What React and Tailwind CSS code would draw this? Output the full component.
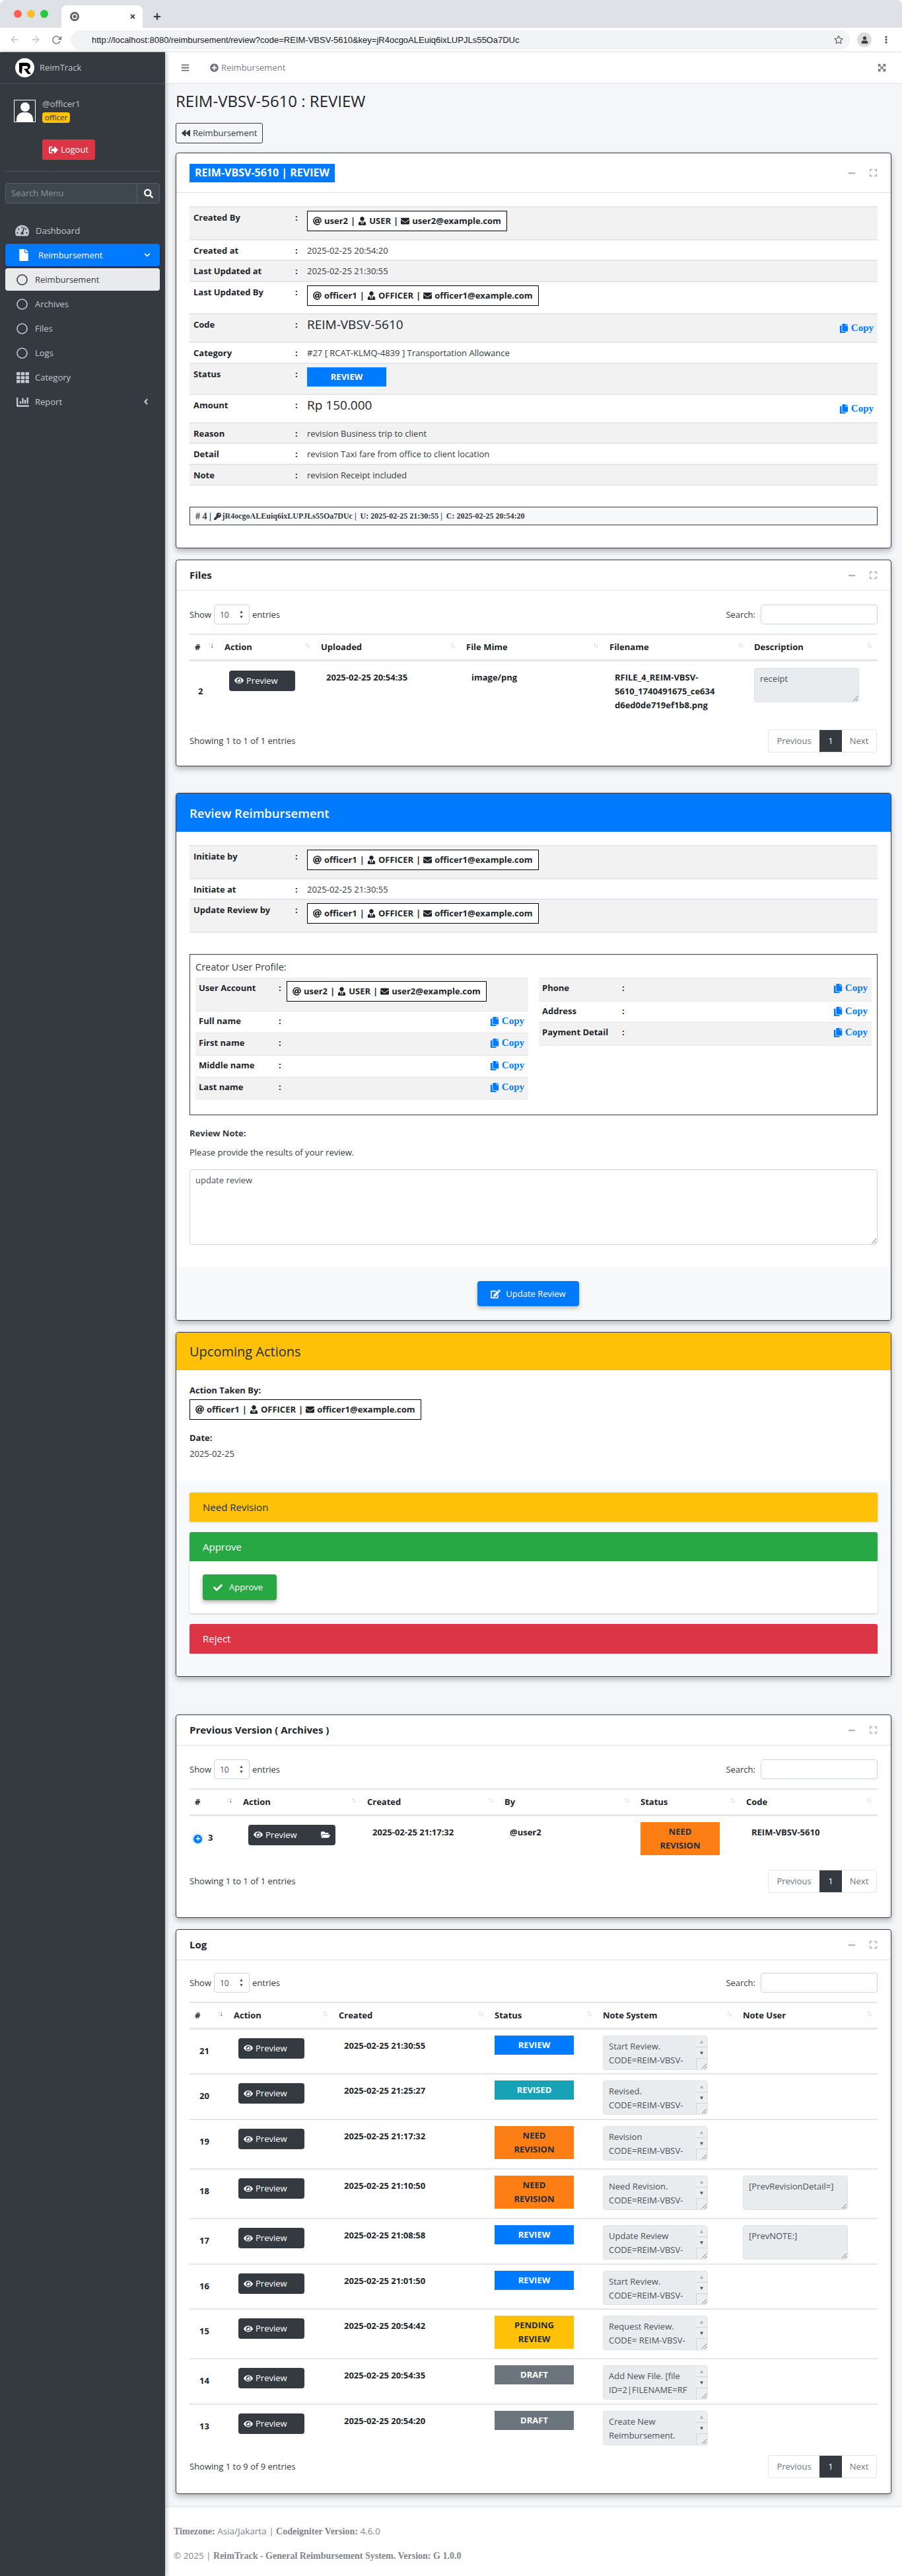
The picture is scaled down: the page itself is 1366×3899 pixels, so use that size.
import React from 'react';
import {
  FaTachometerAlt, FaFile, FaChevronDown, FaAngleLeft, FaBars, FaPlusCircle, FaExpandArrowsAlt, FaBackward,
  FaMinus, FaExpand, FaAt, FaUserTie, FaEnvelope, FaCopy, FaKey, FaEye, FaFolderOpen, FaEdit, FaCheck,
  FaSignOutAlt, FaTh, FaChartBar, FaSearch, FaRegCircle, FaUser, FaRegStar, FaEllipsisV, FaPlus, FaTimes,
} from 'react-icons/fa';
import { FiArrowLeft, FiArrowRight, FiRotateCw } from 'react-icons/fi';

function UserBox({ name, role, email, className = '' }) {
  return (
    <div className={`inline-flex items-center h-[31px] px-2 border border-black bg-white font-bold text-[#212529] whitespace-nowrap ${className}`}>
      <FaAt className="mr-1 text-[13px]" /> {name} <span className="mx-1">|</span>
      <FaUserTie className="mr-1 text-[13px]" /> {role} <span className="mx-1">|</span>
      <FaEnvelope className="mr-1 text-[13px]" /> {email}
    </div>
  );
}

function CopyBtn() {
  return (
    <span className="flex items-center gap-1 font-['Liberation_Serif',serif] font-bold text-[15px] text-[#007bff] whitespace-nowrap">
      <FaCopy className="text-[14px]" /> Copy
    </span>
  );
}

function InfoRow({ label, h, odd, children, copy }) {
  return (
    <div className={`flex border-t-2 border-[#e4e6e9] pt-[5px] ${h} ${odd ? 'bg-[#f2f2f2]' : 'bg-white'}`}>
      <div className="w-[160px] pl-[6px] font-bold text-[#212529] shrink-0">{label}</div>
      <div className="w-[18px] font-bold shrink-0 text-[#212529]">:</div>
      <div className="flex-1 text-[#343a40]">{children}</div>
      {copy && <div className="pr-[6px] self-center -mt-[5px]"><CopyBtn /></div>}
    </div>
  );
}

function ProfileRow({ label, h, odd, children, copy = true }) {
  return (
    <div className={`flex items-start border-t border-[#e4e6e9] pt-[4px] pl-[5px] pr-[6px] ${h} ${odd ? 'bg-[#f2f2f2]' : 'bg-white'}`}>
      <div className="w-[121px] font-bold text-[#212529] shrink-0">{label}</div>
      <div className="w-[12px] shrink-0 font-bold">:</div>
      <div className="flex-1">{children}</div>
      {copy && <CopyBtn />}
    </div>
  );
}

function CardTools() {
  return (
    <div className="flex items-center gap-[20px] text-[#adb5bd]">
      <FaMinus className="text-[12px]" />
      <FaExpand className="text-[13px]" />
    </div>
  );
}

function Card({ title, className = '', children }) {
  return (
    <section className={`bg-white border border-[#343a40] rounded-[4px] shadow-[0_4px_8px_rgba(0,0,0,0.28)] ${className}`}>
      <div className="flex items-center justify-between h-[46px] px-5 border-b border-[#dfe2e5]">
        <h3 className="font-bold text-[#212529] text-[15px]">{title}</h3>
        <CardTools />
      </div>
      {children}
    </section>
  );
}

function TableTools() {
  return (
    <div className="flex items-center justify-between h-[30px]">
      <div className="flex items-center text-[#343a40]">
        Show
        <span className="flex items-center justify-between w-[54px] h-[30px] mx-1 px-2 border border-[#ced4da] rounded-[4px] text-[12px] text-[#495057]">
          10
          <span className="flex flex-col text-[7px] leading-[8px]"><span>▲</span><span>▼</span></span>
        </span>
        entries
      </div>
      <div className="flex items-center text-[#343a40]">
        Search:
        <span className="block w-[177px] h-[30px] ml-2 border border-[#ced4da] rounded-[4px] bg-white"></span>
      </div>
    </div>
  );
}

function Pager({ text }) {
  return (
    <div className="flex items-center justify-between">
      <span className="text-[#343a40]">{text}</span>
      <div className="flex h-[35px] mr-px border border-[#e4e6e9] rounded-[4px] text-[#6c757d]">
        <span className="flex items-center justify-center w-[77px]">Previous</span>
        <span className="flex items-center justify-center w-[34px] bg-[#343a40] text-white">1</span>
        <span className="flex items-center justify-center w-[52px]">Next</span>
      </div>
    </div>
  );
}

function SortIcon({ active }) {
  return (
    <span className="text-[11px] font-normal tracking-[-2px] pr-[2px] leading-none mb-2 shrink-0">
      <span className="text-[#c4c8cc]">↑</span>
      <span className={active ? 'text-[#343a40]' : 'text-[#c4c8cc]'}>↓</span>
    </span>
  );
}

function TableHead({ cols }) {
  return (
    <thead>
      <tr className="border-t-2 border-b-[3px] border-t-[#e4e6e9] border-b-[#e4e6e9] h-[39px]">
        {cols.map((c, i) => (
          <th key={c} className="px-2 font-bold text-left text-[#212529]">
            <div className="flex items-center justify-between">
              {c}
              <SortIcon active={i === 0} />
            </div>
          </th>
        ))}
      </tr>
    </thead>
  );
}

function PreviewBtn({ folder, className = 'w-[100px]' }) {
  return (
    <span className={`inline-flex items-center justify-between h-[31px] px-2 bg-[#343a40] text-white rounded-[4px] ${className}`}>
      <span className="flex items-center gap-1"><FaEye className="text-[14px]" /> Preview</span>
      {folder && <FaFolderOpen className="text-[14px]" />}
    </span>
  );
}

function StatusBadge({ color, children, className = '' }) {
  return (
    <div className={`w-[120px] px-4 py-[4px] font-bold text-center leading-[21px] ${color} ${className}`}>{children}</div>
  );
}

const blue = 'bg-[#007bff] text-white';
const teal = 'bg-[#17a2b8] text-white';
const orange = 'bg-[#fd7e14] text-[#1f2d3d]';
const yellow = 'bg-[#ffc107] text-[#1f2d3d]';
const grey = 'bg-[#6c757d] text-white';

const logs = [
  { id: 21, at: '2025-02-25 21:30:55', status: 'REVIEW', color: blue, sys: 'Start Review.\nCODE=REIM-VBSV-5610', h: 'h-[69px]' },
  { id: 20, at: '2025-02-25 21:25:27', status: 'REVISED', color: teal, sys: 'Revised.\nCODE=REIM-VBSV-5610', h: 'h-[69px]' },
  { id: 19, at: '2025-02-25 21:17:32', status: 'NEED REVISION', color: orange, sys: 'Revision\nCODE=REIM-VBSV-5610', h: 'h-[75px]' },
  { id: 18, at: '2025-02-25 21:10:50', status: 'NEED REVISION', color: orange, sys: 'Need Revision.\nCODE=REIM-VBSV-5610', user: '[PrevRevisionDetail=]', h: 'h-[75px]' },
  { id: 17, at: '2025-02-25 21:08:58', status: 'REVIEW', color: blue, sys: 'Update Review\nCODE=REIM-VBSV-5610', user: '[PrevNOTE:]', h: 'h-[69px]' },
  { id: 16, at: '2025-02-25 21:01:50', status: 'REVIEW', color: blue, sys: 'Start Review.\nCODE=REIM-VBSV-5610', h: 'h-[68px]' },
  { id: 15, at: '2025-02-25 20:54:42', status: 'PENDING REVIEW', color: yellow, sys: 'Request Review.\nCODE= REIM-VBSV-5610', h: 'h-[75px]' },
  { id: 14, at: '2025-02-25 20:54:35', status: 'DRAFT', color: grey, sys: 'Add New File. [file\nID=2|FILENAME=RF', h: 'h-[69px]' },
  { id: 13, at: '2025-02-25 20:54:20', status: 'DRAFT', color: grey, sys: 'Create New\nReimbursement.', h: 'h-[69px]' },
];

function Grip() {
  return (
    <svg width="9" height="9" viewBox="0 0 9 9" className="absolute right-[1px] bottom-[1px]">
      <path d="M1 8L8 1M5 8L8 5" stroke="#6c757d" strokeWidth="1" fill="none" />
    </svg>
  );
}

function NoteBox({ value, scroll, h = 'h-[52px]' }) {
  return (
    <div className={`relative w-[159px] ${h}`}>
      <textarea
        readOnly
        value={value}
        className={`block w-full h-full py-[5px] pl-2 bg-[#e9ecef] border border-[#dfe2e5] rounded-[4px] text-[#495057] leading-[21px] overflow-hidden resize-none ${scroll ? 'pr-[22px]' : 'pr-2'}`}
      />
      {scroll && (
        <div className="absolute top-[1px] right-[1px] bottom-[1px] w-[17px] flex flex-col items-center bg-[#eceef0]">
          <span className="h-[17px] w-full border-b border-[#ced4da] text-center text-[8px] leading-[16px] text-[#a9adb1]">▲</span>
          <span className="h-[16px] text-[8px] leading-[16px] text-[#495057]">▼</span>
          <span className="flex-1 w-full border-t border-l border-[#ced4da]"></span>
        </div>
      )}
      <Grip />
    </div>
  );
}

function Sidebar() {
  const sub = ['Archives', 'Files', 'Logs'];
  return (
    <aside className="w-[250px] shrink-0 bg-[#343a40] text-[#c2c7d0] shadow-[2px_0_6px_rgba(0,0,0,0.25)] z-10">
      <div className="flex items-center h-[48px] pl-[23px] border-b border-[#4b545c]">
        <svg width="29" height="29" viewBox="0 0 29 29" className="shrink-0">
          <circle cx="14.5" cy="14.5" r="14.5" fill="#fff" />
          <path d="M6 7h11c4 0 6 2.500 6 5.500 0 2.500-1.500 4.500-4 5l5 6.500h-5l-6-8h4c1.300 0 2-.8 2-1.800S18.300 12 17 12h-6l-1 12-4-3z" fill="#000" />
        </svg>
        <span className="ml-2 text-[13px]">ReimTrack</span>
      </div>
      <div className="flex pl-[21px] pt-[24px] h-[132px] items-start">
        <div className="relative w-[33px] h-[34px] border border-white bg-[#343a40] overflow-hidden shrink-0">
          <span className="absolute left-[9px] top-[3px] w-[14px] h-[14px] rounded-full bg-white"></span>
          <span className="absolute left-[3px] top-[18px] w-[25px] h-[20px] rounded-t-[10px] bg-white"></span>
        </div>
        <div className="ml-[10px] -mt-[4px]">
          <div className="h-[20px]">@officer1</div>
          <span className="inline-block h-[16px] px-1 leading-[15px] rounded-[4px] bg-[#ffc107] text-[#1f2d3d] text-[11.500px]">officer</span>
          <div className="flex items-center justify-center gap-1 w-[80px] h-[31px] mt-[23px] rounded-[3px] bg-[#dc3545] text-white">
            <FaSignOutAlt className="text-[14px]" /> Logout
          </div>
        </div>
      </div>
      <div className="mx-2 border-t border-[#4f5962]"></div>
      <div className="flex h-[31px] mx-2 mt-[17px] border border-[#56606a] rounded-[4px] bg-[#3f474e]">
        <span className="flex-1 pl-2 leading-[29px] text-[#8d949b]">Search Menu</span>
        <span className="flex items-center justify-center w-[34px] border-l border-[#56606a] text-white"><FaSearch className="text-[14px]" /></span>
      </div>
      <nav className="mx-2 mt-[24px]">
        <div className="flex items-center h-[34px] mb-[3px] pl-[16px]">
          <FaTachometerAlt className="w-[21px] text-[20px] -ml-[1px] mr-[10px]" /> Dashboard
        </div>
        <div className="flex items-center h-[34px] mb-[3px] pl-[19px] pr-[14px] rounded-[4px] bg-[#007bff] text-white shadow-[0_1px_3px_rgba(0,0,0,0.3)]">
          <FaFile className="text-[18px] mr-[13px]" /> <span className="flex-1">Reimbursement</span> <FaChevronDown className="text-[10px]" />
        </div>
        <div className="flex items-center h-[34px] mb-[3px] pl-[17px] rounded-[4px] bg-[#e9eaeb] text-[#343a40]">
          <FaRegCircle className="text-[17px] mr-[11px]" /> Reimbursement
        </div>
        {sub.map((s) => (
          <div key={s} className="flex items-center h-[34px] mb-[3px] pl-[17px]">
            <FaRegCircle className="text-[17px] mr-[11px]" /> {s}
          </div>
        ))}
        <div className="flex items-center h-[34px] mb-[3px] pl-[17px]">
          <FaTh className="text-[19px] mr-[9px]" /> Category
        </div>
        <div className="flex items-center h-[34px] pl-[17px] pr-[14px]">
          <FaChartBar className="text-[19px] mr-[9px]" /> <span className="flex-1">Report</span> <FaAngleLeft className="text-[14px]" />
        </div>
      </nav>
    </aside>
  );
}

function BrowserBar() {
  return (
    <header className="shrink-0 rounded-t-[8px] overflow-hidden">
      <div className="relative flex items-end h-[42px] pl-[93px] bg-[#dee1e6]">
        <div className="absolute left-[21px] top-[15px] flex gap-[8px]">
          <span className="w-[12px] h-[12px] rounded-full bg-[#ff5f57]"></span>
          <span className="w-[12px] h-[12px] rounded-full bg-[#febc2e]"></span>
          <span className="w-[12px] h-[12px] rounded-full bg-[#28c840]"></span>
        </div>
        <div className="flex items-center justify-between w-[123px] h-[34px] pl-3 pr-[10px] bg-white rounded-t-[8px]">
          <svg width="16" height="16" viewBox="0 0 16 16">
            <circle cx="8" cy="8" r="7" fill="#5f6368" />
            <circle cx="8" cy="8" r="4" fill="#fff" />
            <circle cx="8" cy="8" r="2.500" fill="#5f6368" />
          </svg>
          <FaTimes className="text-[10px] text-[#3c4043]" />
        </div>
        <FaPlus className="ml-[16px] mb-[11px] text-[12px] text-[#3c4043]" />
      </div>
      <div className="flex items-center h-[37px] bg-white border-b border-[#dadce0]">
        <FiArrowLeft className="ml-[14px] text-[16px] text-[#bdc1c6]" />
        <FiArrowRight className="ml-[16px] text-[16px] text-[#bdc1c6]" />
        <FiRotateCw className="ml-[16px] text-[15px] text-[#5f6368]" />
        <div className="flex items-center flex-1 h-[29px] ml-[14px] pl-[32px] pr-[10px] rounded-full bg-[#f1f3f4] font-['Liberation_Sans',sans-serif] text-[13px] text-[#202124]">
          <span className="flex-1">http://localhost:8080/reimbursement/review?code=REIM-VBSV-5610&amp;key=jR4ocgoALEuiq6ixLUPJLs55Oa7DUc</span>
          <FaRegStar className="text-[14px] text-[#5f6368]" />
        </div>
        <span className="flex items-center justify-center w-[22px] h-[22px] ml-[11px] rounded-full bg-[#dadce0] text-[#3c4043]"><FaUser className="text-[11px]" /></span>
        <FaEllipsisV className="ml-[16px] mr-[18px] text-[12px] text-[#5f6368]" />
      </div>
    </header>
  );
}

export default function App() {
  return (
    <div className="flex flex-col w-full min-h-screen bg-white font-['Open_Sans',sans-serif] text-[13px] leading-[21px] text-[#212529]">
      <BrowserBar />
      <div className="flex flex-1">
        <Sidebar />
        <main className="flex-1 min-w-0 flex flex-col bg-[#f4f6f9]">
          <div className="flex items-center h-[48px] shrink-0 bg-white border-b border-[#dee2e6] text-[#7f8387]">
            <FaBars className="ml-[24px] text-[13px] text-[#6f7479]" />
            <FaPlusCircle className="ml-[31px] text-[13px] text-[#6f7479]" />
            <span className="ml-1 flex-1">Reimbursement</span>
            <FaExpandArrowsAlt className="mr-[24px] text-[13px] text-[#6f7479]" />
          </div>

          <div className="px-4">
            <h1 className="mt-[8px] h-[36px] leading-[36px] text-[24px] font-medium text-[#212529]">REIM-VBSV-5610 : REVIEW</h1>
            <div className="inline-flex items-center gap-1 h-[31px] mt-[15px] px-2 border border-[#343a40] rounded-[3px] text-[#343a40]">
              <FaBackward className="text-[13px]" /> Reimbursement
            </div>

            {/* detail card */}
            <section className="mt-[14px] h-[599px] bg-white border border-[#343a40] rounded-[4px] shadow-[0_4px_8px_rgba(0,0,0,0.28)]">
              <div className="flex items-center justify-between h-[60px] pl-5 pr-[20px] border-b border-[#dfe2e5]">
                <span className="flex items-center h-[28px] px-2 bg-[#007bff] text-white font-bold text-[16px]">REIM-VBSV-5610 | REVIEW</span>
                <CardTools />
              </div>
              <div className="px-5 pt-[20px]">
                <InfoRow label="Created By" h="h-[50px]" odd><UserBox name="user2" role="USER" email="user2@example.com" /></InfoRow>
                <InfoRow label="Created at" h="h-[31px]">2025-02-25 20:54:20</InfoRow>
                <InfoRow label="Last Updated at" h="h-[32px]" odd>2025-02-25 21:30:55</InfoRow>
                <InfoRow label="Last Updated By" h="h-[49px]"><UserBox name="officer1" role="OFFICER" email="officer1@example.com" /></InfoRow>
                <InfoRow label="Code" h="h-[43px]" odd copy><span className="text-[19px] font-medium text-[#212529]">REIM-VBSV-5610</span></InfoRow>
                <InfoRow label="Category" h="h-[32px]">#27 [ RCAT-KLMQ-4839 ] Transportation Allowance</InfoRow>
                <InfoRow label="Status" h="h-[47px]" odd><StatusBadge color={blue} className="h-[29px]">REVIEW</StatusBadge></InfoRow>
                <InfoRow label="Amount" h="h-[43px]" copy><span className="text-[19px] font-medium text-[#212529]">Rp 150.000</span></InfoRow>
                <InfoRow label="Reason" h="h-[31px]" odd>revision Business trip to client</InfoRow>
                <InfoRow label="Detail" h="h-[32px]">revision Taxi fare from office to client location</InfoRow>
                <div className="border-b-2 border-[#e4e6e9]">
                  <InfoRow label="Note" h="h-[31px]" odd>revision Receipt included</InfoRow>
                </div>
                <div className="flex items-center h-[28px] mt-[32px] px-2 border border-[#343a40] bg-[#f8f9fa] font-['Liberation_Serif',serif] font-bold text-[12px] text-[#343a40]">
                  <span className="text-[14px]"># 4 |&nbsp;</span><FaKey className="text-[11px] mr-[2px]" /> jR4ocgoALEuiq6ixLUPJLs55Oa7DUc&nbsp;|&nbsp; U: 2025-02-25 21:30:55&nbsp;|&nbsp; C: 2025-02-25 20:54:20
                </div>
              </div>
            </section>

            <Card title="Files" className="mt-[17px] h-[313px]">
              <div className="px-5 pt-[21px]">
                <TableTools />
                <table className="w-full mt-[14px] table-fixed border-collapse">
                  <colgroup>
                    <col className="w-[45px]" /><col className="w-[146px]" /><col className="w-[220px]" /><col className="w-[217px]" /><col className="w-[219px]" /><col />
                  </colgroup>
                  <TableHead cols={['#', 'Action', 'Uploaded', 'File Mime', 'Filename', 'Description']} />
                  <tbody>
                    <tr className="h-[92px] align-top">
                      <td className="pl-[13px] pt-[35px] font-bold">2</td>
                      <td className="pl-[15px] pt-[14px]"><PreviewBtn /></td>
                      <td className="pl-[16px] pt-[14px] font-bold">2025-02-25 20:54:35</td>
                      <td className="pl-[16px] pt-[14px] font-bold">image/png</td>
                      <td className="pl-[16px] pt-[14px] font-bold whitespace-nowrap">
                        RFILE_4_REIM-VBSV-<br />5610_1740491675_ce634<br />d6ed0de719ef1b8.png
                      </td>
                      <td className="pl-2 pt-[10px]"><NoteBox value="receipt" /></td>
                    </tr>
                  </tbody>
                </table>
                <div className="mt-[13px]"><Pager text="Showing 1 to 1 of 1 entries" /></div>
              </div>
            </Card>

            {/* review form */}
            <section className="mt-[40px] h-[799px] flex flex-col bg-white border border-[#343a40] rounded-[4px] overflow-hidden shadow-[0_4px_8px_rgba(0,0,0,0.28)]">
              <div className="flex items-center h-[58px] px-5 bg-[#007bff] text-white font-semibold text-[18.500px] shrink-0">Review Reimbursement</div>
              <div className="flex-1 px-5 pt-[20px]">
                <InfoRow label="Initiate by" h="h-[50px]" odd><UserBox name="officer1" role="OFFICER" email="officer1@example.com" /></InfoRow>
                <InfoRow label="Initiate at" h="h-[31px]">2025-02-25 21:30:55</InfoRow>
                <div className="border-b-2 border-[#e4e6e9]">
                  <InfoRow label="Update Review by" h="h-[50px]" odd><UserBox name="officer1" role="OFFICER" email="officer1@example.com" /></InfoRow>
                </div>
                <div className="h-[244px] mt-[32px] px-2 pt-2 border border-[#343a40]">
                  <div className="text-[14.500px] h-[27px] text-[#343a40]">Creator User Profile:</div>
                  <div className="grid grid-cols-2 gap-[16px]">
                    <div className="border-b border-[#e4e6e9]">
                      <ProfileRow label="User Account" h="h-[50px]" odd copy={false}><UserBox name="user2" role="USER" email="user2@example.com" /></ProfileRow>
                      <ProfileRow label="Full name" h="h-[33px]" />
                      <ProfileRow label="First name" h="h-[34px]" odd />
                      <ProfileRow label="Middle name" h="h-[33px]" />
                      <ProfileRow label="Last name" h="h-[33px]" odd />
                    </div>
                    <div className="self-start border-b border-[#e4e6e9]">
                      <ProfileRow label="Phone" h="h-[35px]" odd />
                      <ProfileRow label="Address" h="h-[32px]" />
                      <ProfileRow label="Payment Detail" h="h-[35px]" odd />
                    </div>
                  </div>
                </div>
                <div className="mt-[17px] font-bold text-[#343a40]">Review Note:</div>
                <p className="mt-[8px] text-[#343a40]">Please provide the results of your review.</p>
                <div className="relative h-[114px] mt-[15px]">
                  <textarea readOnly value="update review" className="block w-full h-full px-2 py-[5px] border border-[#ced4da] rounded-[4px] text-[#495057] resize-none" />
                  <Grip />
                </div>
              </div>
              <div className="flex justify-center items-start h-[80px] pt-[21px] pr-[16px] bg-[#f8f9fa] shrink-0">
                <span className="flex items-center justify-center gap-2 w-[154px] h-[38px] rounded-[4px] bg-[#007bff] text-white shadow-[0_3px_6px_rgba(0,0,0,0.25)]">
                  <FaEdit className="text-[15px]" /> Update Review
                </span>
              </div>
            </section>

            {/* next actions */}
            <section className="mt-[17px] h-[522px] flex flex-col bg-white border border-[#343a40] rounded-[4px] overflow-hidden shadow-[0_4px_8px_rgba(0,0,0,0.28)]">
              <div className="flex items-center h-[57px] px-5 bg-[#ffc107] text-[#1f2d3d] font-medium text-[20px] shrink-0">Upcoming Actions</div>
              <div className="h-[168px] px-5 pt-[20px] shrink-0">
                <div className="font-bold text-[#212529]">Action Taken By:</div>
                <UserBox name="officer1" role="OFFICER" email="officer1@example.com" className="mt-[3px]" />
                <div className="mt-[17px] font-bold text-[#212529]">Date:</div>
                <div className="mt-[3px] text-[#343a40]">2025-02-25</div>
              </div>
              <div className="flex-1 px-5 pt-[17px] bg-[#f8f9fa]">
                <div className="flex items-center h-[44px] px-5 rounded-t-[3px] bg-[#ffc107] text-[#1f2d3d] text-[15px] shadow-[0_1px_3px_rgba(0,0,0,0.2)]">Need Revision</div>
                <div className="mt-[16px] bg-white rounded-[3px] shadow-[0_1px_3px_rgba(0,0,0,0.2)]">
                  <div className="flex items-center h-[44px] px-5 rounded-t-[3px] bg-[#28a745] text-white text-[15px]">Approve</div>
                  <div className="h-[79px] pl-5 pt-[20px]">
                    <span className="inline-flex items-center gap-[10px] w-[112px] h-[39px] pl-4 rounded-[4px] bg-[#28a745] text-white shadow-[0_3px_6px_rgba(0,0,0,0.3)]">
                      <FaCheck className="text-[14px]" /> Approve
                    </span>
                  </div>
                </div>
                <div className="flex items-center h-[45px] mt-[16px] px-5 rounded-t-[3px] bg-[#dc3545] text-white text-[15px]">Reject</div>
              </div>
            </section>

            <Card title="Previous Version ( Archives )" className="mt-[57px] h-[308px]">
              <div className="px-5 pt-[21px]">
                <TableTools />
                <table className="w-full mt-[14px] table-fixed border-collapse">
                  <colgroup>
                    <col className="w-[73px]" /><col className="w-[188px]" /><col className="w-[208px]" /><col className="w-[206px]" /><col className="w-[160px]" /><col />
                  </colgroup>
                  <TableHead cols={['#', 'Action', 'Created', 'By', 'Status', 'Code']} />
                  <tbody>
                    <tr className="h-[68px] align-top">
                      <td className="pt-[22px] pl-[4px]">
                        <div className="flex items-center gap-[7px]">
                          <span className="flex items-center justify-center w-[17px] h-[17px] mt-1 rounded-full bg-[#007bff] border-2 border-[#d6e6f8] text-white text-[8px]"><FaPlus /></span>
                          <b>3</b>
                        </div>
                      </td>
                      <td className="pl-[16px] pt-[13px]"><PreviewBtn folder className="w-[132px]" /></td>
                      <td className="pl-[16px] pt-[14px] font-bold">2025-02-25 21:17:32</td>
                      <td className="pl-[16px] pt-[14px] font-bold">@user2</td>
                      <td className="pl-2 pt-[9px]"><StatusBadge color={orange}>NEED REVISION</StatusBadge></td>
                      <td className="pl-[16px] pt-[14px] font-bold">REIM-VBSV-5610</td>
                    </tr>
                  </tbody>
                </table>
                <div className="mt-[15px]"><Pager text="Showing 1 to 1 of 1 entries" /></div>
              </div>
            </Card>

            <Card title="Log" className="mt-[17px] h-[855px]">
              <div className="px-5 pt-[19px]">
                <TableTools />
                <table className="w-full mt-[14px] table-fixed border-collapse">
                  <colgroup>
                    <col className="w-[59px]" /><col className="w-[159px]" /><col className="w-[236px]" /><col className="w-[164px]" /><col className="w-[212px]" /><col />
                  </colgroup>
                  <TableHead cols={['#', 'Action', 'Created', 'Status', 'Note System', 'Note User']} />
                  <tbody>
                    {logs.map((l, i) => (
                      <tr key={l.id} className={`align-top ${l.h} ${i < logs.length - 1 ? 'border-b-2 border-[#e4e6e9]' : ''}`}>
                        <td className="pl-[15px] pt-[22px] font-bold">{l.id}</td>
                        <td className="pl-[15px] pt-[13px]"><PreviewBtn /></td>
                        <td className="pl-[16px] pt-[14px] font-bold">{l.at}</td>
                        <td className="pl-2 pt-[9px]"><StatusBadge color={l.color}>{l.status}</StatusBadge></td>
                        <td className="pl-2 pt-[9px]"><NoteBox value={l.sys} scroll /></td>
                        <td className="pl-2 pt-[9px]">{l.user && <NoteBox value={l.user} />}</td>
                      </tr>
                    ))}
                  </tbody>
                </table>
                <div className="mt-[8px]"><Pager text="Showing 1 to 9 of 9 entries" /></div>
              </div>
            </Card>
          </div>

          <footer className="mt-[18px] flex-1 bg-white border-t-2 border-[#e9ecef] px-[13px] pt-[26px] text-[13.500px] text-[#7f858b]">
            <div>
              <b className="font-['Liberation_Serif',serif] text-[14px]">Timezone:</b> Asia/Jakarta | <b className="font-['Liberation_Serif',serif] text-[14px]">Codeigniter Version:</b> 4.6.0
            </div>
            <div className="mt-[16px]">
              © 2025 | <b className="font-['Liberation_Serif',serif] text-[14px]">ReimTrack - General Reimbursement System. Version: G 1.0.0</b>
            </div>
          </footer>
        </main>
      </div>
    </div>
  );
}
